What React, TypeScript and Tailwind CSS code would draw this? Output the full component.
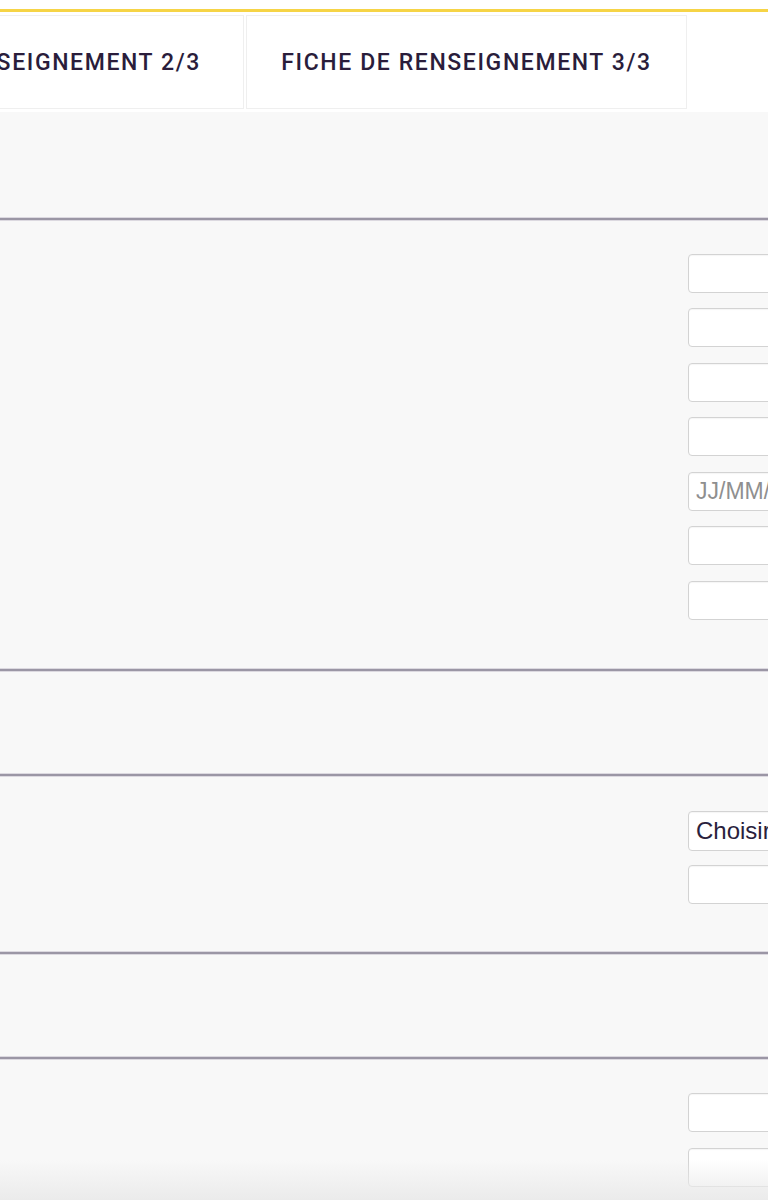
import React from "react";

const font = { fontFamily: "Roboto, 'Liberation Sans', sans-serif" };
const fieldFont = { fontFamily: "'Liberation Sans', Arial, sans-serif" };

function Divider() {
  return (
    <div className="h-[2px] bg-[#9b96a5] shadow-[0_1px_0_#dcd9e0,0_-1px_0_#dcd9e0]" />
  );
}

function Field({ placeholder }: { placeholder?: string }) {
  return (
    <input
      type="text"
      placeholder={placeholder}
      className="h-[39px] w-[320px] shrink-0 rounded-[4px] border border-[#d3d3d3] bg-white px-[7px] text-[23px] text-[#2a1f3d] placeholder:text-[#8f8f8f] shadow-[inset_0_1px_1px_rgba(0,0,0,0.04)] outline-none"
      style={fieldFont}
    />
  );
}

function SelectBox({ label }: { label: string }) {
  return (
    <div
      className="flex h-[40px] w-[320px] shrink-0 items-center whitespace-nowrap rounded-[4px] border border-[#d3d3d3] bg-white px-[7px] text-[24px] text-[#2a1f3d] shadow-[inset_0_1px_1px_rgba(0,0,0,0.04)]"
      style={fieldFont}
    >
      {label}
    </div>
  );
}

function Section({
  top,
  bottom,
  gap,
  children,
}: {
  top: number;
  bottom: number;
  gap: number;
  children: React.ReactNode;
}) {
  return (
    <div className="flex" style={{ paddingTop: top, paddingBottom: bottom }}>
      <div className="w-[688px] shrink-0" />
      <div className="flex flex-col" style={{ gap }}>
        {children}
      </div>
    </div>
  );
}

export default function App() {
  return (
    <div className="relative h-[1200px] w-[768px] overflow-hidden bg-[#f8f8f8]" style={font}>
      {/* header strip */}
      <div className="h-[9px] bg-white" />
      <div className="h-[3px] bg-[#f6d446]" />
      <div className="flex h-[100px] items-start bg-white pt-[3px]">
        <div className="-ml-[196px] flex h-[94px] w-[440px] shrink-0 items-center justify-end border border-[#efefef] pr-[42px] pt-[3px]">
          <span className="whitespace-nowrap text-[23px] font-medium tracking-[0.07em] text-[#2a1d3b]">
            FICHE DE RENSEIGNEMENT 2/3
          </span>
        </div>
        <div className="ml-[2px] flex h-[94px] w-[441px] shrink-0 items-center justify-center border border-[#efefef] pt-[3px]">
          <span className="whitespace-nowrap text-[23px] font-medium tracking-[0.07em] text-[#2a1d3b]">
            FICHE DE RENSEIGNEMENT 3/3
          </span>
        </div>
      </div>

      {/* page heading area */}
      <div className="h-[106px]" />
      <Divider />

      <Section top={33.5} bottom={49} gap={15.6}>
        <Field />
        <Field />
        <Field />
        <Field />
        <Field placeholder="JJ/MM/AAAA" />
        <Field />
        <Field />
      </Section>
      <Divider />

      <div className="h-[103px]" />
      <Divider />

      <Section top={35} bottom={48.5} gap={13.5}>
        <SelectBox label="Choisir..." />
        <Field />
      </Section>
      <Divider />

      <div className="h-[103px]" />
      <Divider />

      <Section top={34} bottom={40} gap={15.6}>
        <Field />
        <Field />
        <Field />
      </Section>

      {/* bottom fade */}
      <div className="pointer-events-none absolute bottom-0 left-0 h-[40px] w-full bg-gradient-to-b from-transparent to-[#ebebeb]" />
    </div>
  );
}
